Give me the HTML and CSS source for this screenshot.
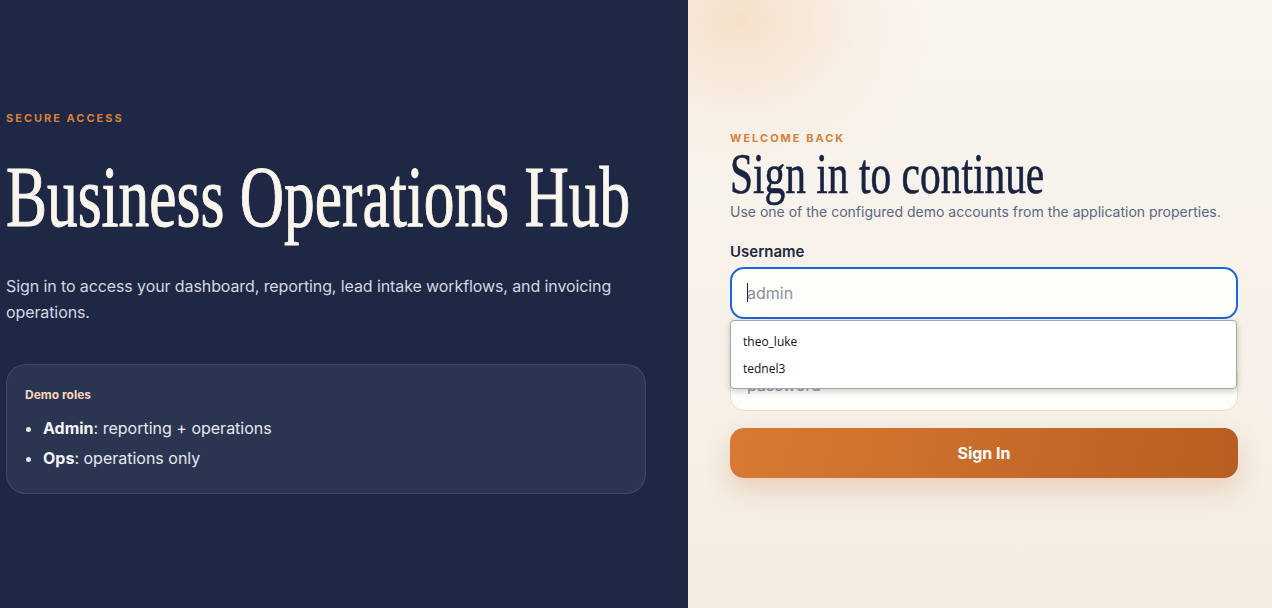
FILE: index.html
```html
<!DOCTYPE html>
<html lang="en">
<head>
<meta charset="UTF-8">
<meta name="viewport" content="width=device-width, initial-scale=1.0">
<title>Business Operations Hub - Sign in</title>
<link rel="stylesheet" href="styles.css">
</head>
<body>

<div class="pagina">
  <section class="intro">
    <div class="intro-contenido">
      <div class="eyebrow">Secure access</div>
      <h1 class="titulo-grande"><span>Business Operations Hub</span></h1>
      <p class="intro-texto">Sign in to access your dashboard, reporting, lead intake workflows, and invoicing operations.</p>
      <div class="roles">
        <div class="roles-titulo">Demo roles</div>
        <ul>
          <li><strong>Admin</strong>: reporting + operations</li>
          <li><strong>Ops</strong>: operations only</li>
        </ul>
      </div>
    </div>
  </section>

  <section class="acceso">
    <form class="formulario" action="#" onsubmit="return false;">
      <div class="eyebrow">Welcome back</div>
      <h2 class="titulo-form"><span>Sign in to continue</span></h2>
      <p class="subtitulo">Use one of the configured demo accounts from the application properties.</p>

      <div class="campo">
        <label for="username">Username</label>
        <div class="caja foco">
          <span class="cursor"></span>
          <span class="placeholder">admin</span>
        </div>
        <!-- lista de sugerencias del navegador -->
        <div class="sugerencias">
          <div class="sugerencia">theo_luke</div>
          <div class="sugerencia">tednel3</div>
        </div>
      </div>

      <div class="campo">
        <label for="password">Password</label>
        <div class="caja">
          <span class="placeholder">password</span>
        </div>
      </div>

      <button class="boton" type="submit">Sign In</button>
    </form>
  </section>
</div>

</body>
</html>
```

FILE: styles.css
```css
* {
  box-sizing: border-box;
}

body {
  margin: 0;
  padding: 0;
  font-family: Inter, "Noto Sans", sans-serif;
  height: 100vh;
  overflow: hidden;
}

.pagina {
  display: flex;
  height: 100vh;
}

/* columna izquierda */
.intro {
  width: 688px;
  flex-shrink: 0;
  background-color: #1e2845;
  display: flex;
  align-items: center;
  padding-left: 6px;
  padding-bottom: 4px;
}

.intro-contenido {
  width: 640px;
}

.eyebrow {
  font-size: 11px;
  font-weight: 700;
  letter-spacing: 2px;
  text-transform: uppercase;
  color: #d9803a;
}

.titulo-grande {
  margin: 29px 0 0;
  font-family: "Liberation Serif", serif;
  font-weight: 400;
  font-size: 86px;
  line-height: 1;
  color: #faf6ee;
  white-space: nowrap;
  -webkit-text-stroke: 1px #faf6ee;
}

.titulo-grande span,
.titulo-form span {
  display: inline-block;
  transform: scaleX(0.714);
  transform-origin: left center;
}

.intro-texto {
  margin: 33px 0 0;
  max-width: 620px;
  font-size: 16px;
  line-height: 26px;
  letter-spacing: -0.1px;
  color: #d3d7e0;
}

.roles {
  margin-top: 39px;
  background-color: #2a3551;
  border: 1px solid rgba(255, 255, 255, 0.1);
  border-radius: 20px;
  padding: 22px 18px 20px;
}

.roles-titulo {
  font-size: 12px;
  font-weight: 700;
  color: #f6d6bc;
}

.roles ul {
  margin: 11px 0 0;
  padding-left: 18px;
  color: #e6e8ee;
  font-size: 16px;
}

.roles li {
  line-height: 30px;
}

.roles strong {
  color: #f3f4f8;
}

/* columna derecha */
.acceso {
  flex: 1;
  display: flex;
  align-items: center;
  padding-left: 42px;
  background-color: #f6f0e8;
  background-image:
    radial-gradient(ellipse 200px 160px at 50px 20px, rgba(245, 222, 198, 0.9) 0, rgba(248, 234, 220, 0.5) 60%, rgba(249, 244, 237, 0) 100%),
    linear-gradient(180deg, #f9f5ef 0%, #f4ede3 100%);
}

.formulario {
  width: 508px;
}

.titulo-form {
  margin: 1px 0 0;
  font-family: "Liberation Serif", serif;
  font-weight: 400;
  font-size: 56px;
  line-height: 1;
  color: #182340;
  white-space: nowrap;
  -webkit-text-stroke: 0.6px #182340;
}

.titulo-form span {
  transform: scaleX(0.74);
}

.subtitulo {
  margin: 1px 0 0;
  font-size: 14px;
  color: #5b6883;
}

.campo {
  position: relative;
  margin-top: 22px;
}

.campo + .campo {
  margin-top: 16px;
}

.campo label {
  display: block;
  font-size: 15px;
  font-weight: 600;
  color: #1f2a3f;
  margin-bottom: 6px;
}

.caja {
  height: 51px;
  border: 1px solid #e6ddd2;
  border-radius: 14px;
  background-color: #fffdf9;
  display: flex;
  align-items: center;
  padding-left: 16px;
}

.caja.foco {
  height: 52px;
  border: 2px solid #1a66dc;
  padding-left: 15px;
}

.placeholder {
  font-size: 16px;
  color: #8b92a2;
}

.cursor {
  width: 1px;
  height: 19px;
  background-color: #1a2438;
  margin-right: -1px;
}

.sugerencias {
  position: absolute;
  left: 0;
  right: 1px;
  top: 78px;
  z-index: 2;
  background-color: #fff;
  border: 1px solid #a6a6a6;
  border-radius: 4px;
  box-shadow: 0 2px 6px rgba(0, 0, 0, 0.2);
  padding: 7px 0 6px;
  font-family: "Segoe UI", "Open Sans", sans-serif;
}

.sugerencia {
  font-size: 12px;
  line-height: 27px;
  padding-left: 12px;
  color: #111;
}

.boton {
  display: block;
  width: 100%;
  height: 50px;
  margin-top: 17px;
  border: none;
  border-radius: 14px;
  background: linear-gradient(100deg, #d87a33 0%, #b85e22 100%);
  color: #fff;
  font-family: Inter, sans-serif;
  font-size: 16px;
  font-weight: 700;
  cursor: pointer;
  box-shadow: 0 12px 24px rgba(200, 120, 60, 0.25);
}

.boton:hover {
  background: linear-gradient(100deg, #c96d2a 0%, #a8531c 100%);
}
```
